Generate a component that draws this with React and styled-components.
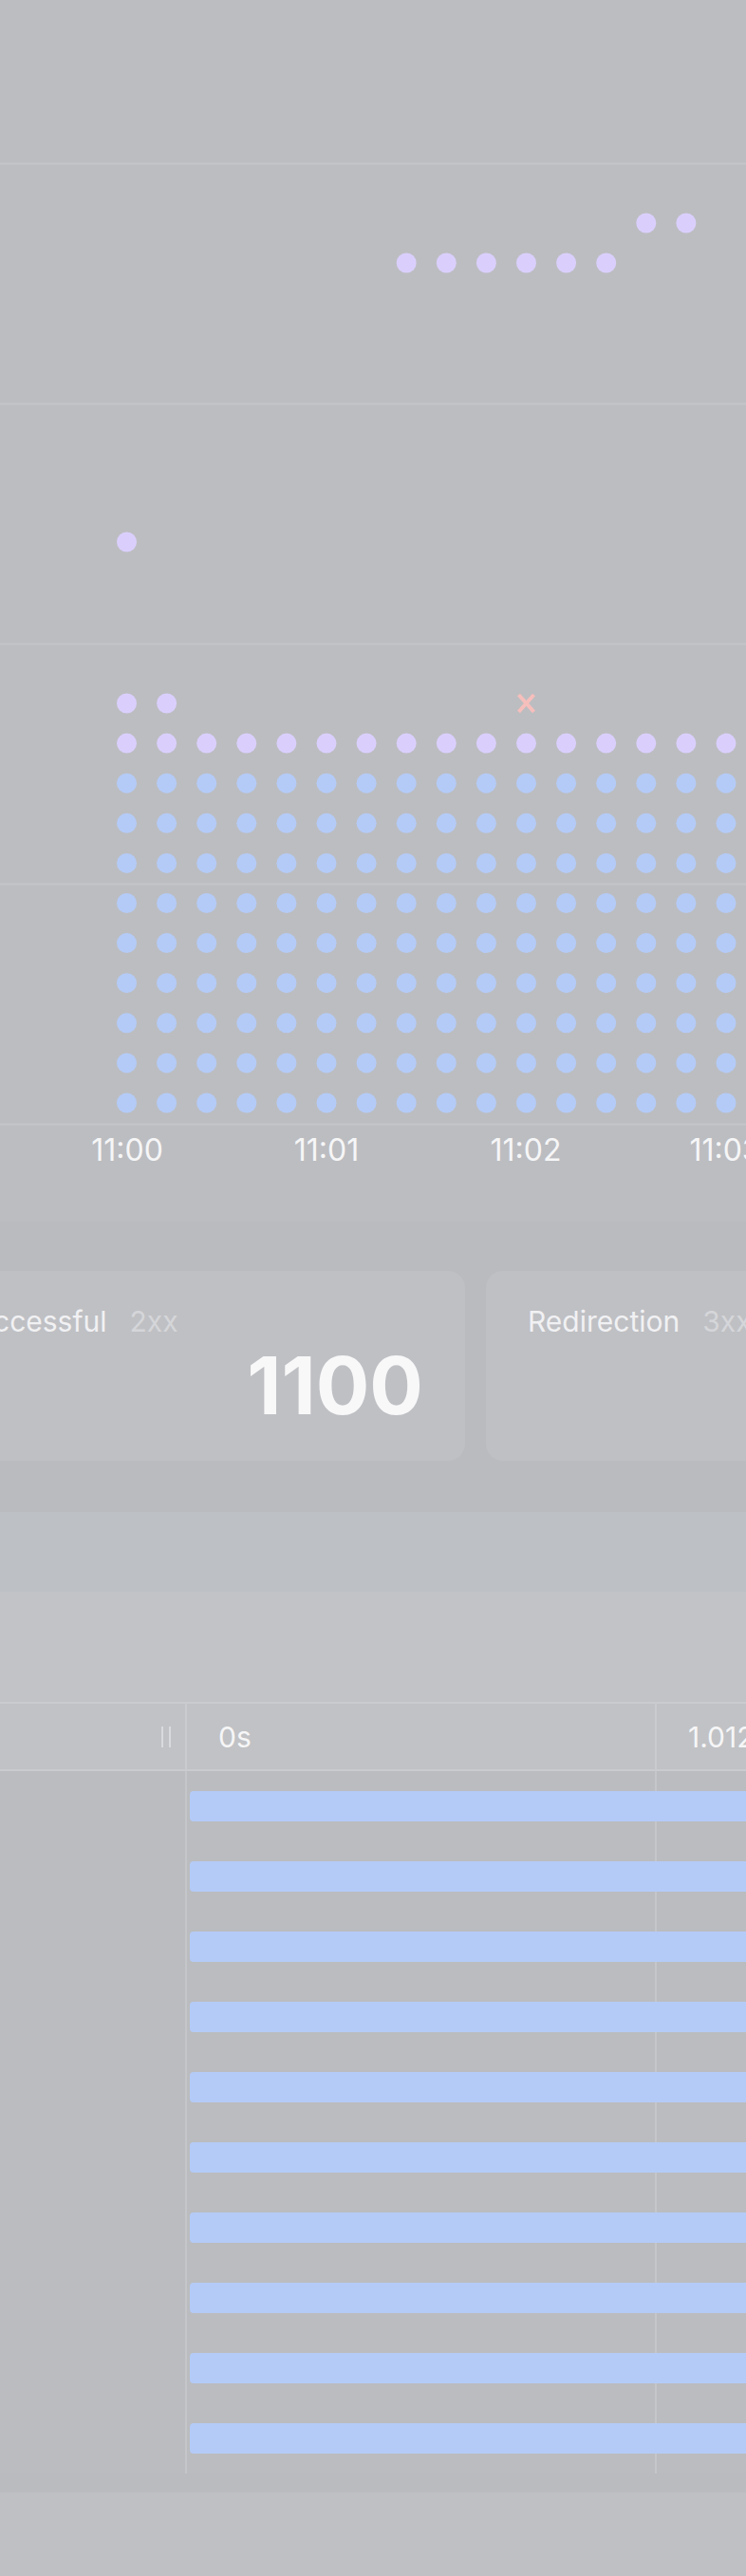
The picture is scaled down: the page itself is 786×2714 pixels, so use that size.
import React from "react";
import styled, { createGlobalStyle } from "styled-components";

const GlobalStyle = createGlobalStyle`
  html, body {
    margin: 0;
    padding: 0;
  }
  body {
    background: #babbbf;
    font-family: Inter, "Noto Sans", sans-serif;
    -webkit-font-smoothing: antialiased;
  }
`;

const Page = styled.div`
  width: 786px;
  height: 2714px;
  overflow: hidden;
  background: #babbbf;
`;

const ChartPanel = styled.section`
  height: 1287px;
  background: #bcbdc1;
  display: flex;
  flex-direction: column;
`;

const ChartSvg = styled.svg`
  display: block;
  flex: none;
`;

const Axis = styled.div`
  display: flex;
  padding-left: 29px;
  height: 36px;
`;

const Tick = styled.span`
  flex: none;
  width: 210px;
  text-align: center;
  font-size: 32px;
  line-height: 36px;
  color: #f6f6f7;
`;

const CardsRow = styled.div`
  display: flex;
  gap: 22px;
  margin-left: -88px;
  padding: 52px 0 54px;
`;

const Card = styled.div`
  flex: none;
  width: 578px;
  height: 200px;
  box-sizing: border-box;
  padding: 36px 44px 0;
  background: #bfc0c4;
  border-radius: 18px;
  display: flex;
  flex-direction: column;
`;

const CardTitle = styled.div`
  font-size: 30px;
  line-height: 34px;
  color: #f1f1f3;
  white-space: nowrap;
`;

const Code = styled.span`
  margin-left: 24px;
  color: #d5d6d9;
`;

const Value = styled.div`
  margin-top: 9px;
  font-size: 84px;
  font-weight: 700;
  line-height: 1;
  text-align: right;
  color: #f8f8f9;
`;

const Band = styled.div`
  height: ${(p) => p.h}px;
  background: ${(p) => p.bg};
`;

const Table = styled.div`
  border-top: 2px solid #cacbcf;
`;

const HeaderRow = styled.div`
  display: grid;
  grid-template-columns: 195px 495px 495px;
  height: 69px;
  background: #c1c2c5;
  border-bottom: 2px solid #cacbcf;
`;

const NameCell = styled.div`
  display: flex;
  align-items: center;
  justify-content: flex-end;
  padding-right: 15px;
`;

const Handle = styled.span`
  width: 10px;
  height: 22px;
  box-sizing: border-box;
  border-left: 2px solid #d9dadd;
  border-right: 2px solid #d9dadd;
`;

const TimeCell = styled.div`
  display: flex;
  align-items: center;
  padding-left: 33px;
  border-left: 2px solid #cacbcf;
  font-size: 30px;
  color: #f6f6f7;
  white-space: nowrap;
`;

const Body = styled.div`
  padding-left: 200px;
  background:
    linear-gradient(
      to right,
      transparent 195px,
      #c5c6c9 195px,
      #c5c6c9 197px,
      transparent 197px,
      transparent 690px,
      #c5c6c9 690px,
      #c5c6c9 692px,
      transparent 692px
    ),
    #bbbcbf;
`;

const BarRow = styled.div`
  height: 74px;
  display: flex;
  align-items: center;
`;

const Bar = styled.div`
  width: 1200px;
  height: 32px;
  flex: none;
  border-radius: 4px;
  background: #b4cbf7;
`;

const Gap = styled.div`
  height: 20px;
`;

const PURPLE = "#dacffc";
const BLUE = "#b4cbf7";
const colX = (i) => 133.5 + 42.1 * i;
const rowY = (k) => 741 + 42.1 * k;

const scatter = [
  { c: 0, y: 571, fill: PURPLE },
  ...[7, 8, 9, 10, 11, 12].map((c) => ({ c, y: 277, fill: PURPLE })),
  { c: 13, y: 235, fill: PURPLE },
  { c: 14, y: 235, fill: PURPLE },
  { c: 0, y: rowY(0), fill: PURPLE },
  { c: 1, y: rowY(0), fill: PURPLE },
];

const Chart = () => {
  const dots = [...scatter];
  for (let c = 0; c < 17; c++) {
    dots.push({ c, y: rowY(1), fill: PURPLE });
    for (let k = 2; k <= 10; k++) dots.push({ c, y: rowY(k), fill: BLUE });
  }
  // failed request marker
  const ex = colX(10);
  const ey = rowY(0);
  return (
    <ChartSvg width="786" height="1194" viewBox="0 0 786 1194">
      {[0, 1, 2, 3, 4].map((i) => (
        <line
          key={i}
          x1="0"
          x2="786"
          y1={172.5 + 253 * i}
          y2={172.5 + 253 * i}
          stroke="#c4c5c9"
          strokeWidth="2"
        />
      ))}
      {dots.map((d, i) => (
        <circle key={i} cx={colX(d.c)} cy={d.y} r="10.5" fill={d.fill} />
      ))}
      <g stroke="#f6bfbc" strokeWidth="4" strokeLinecap="butt">
        <line x1={ex - 8} y1={ey - 9} x2={ex + 8} y2={ey + 9} />
        <line x1={ex + 8} y1={ey - 9} x2={ex - 8} y2={ey + 9} />
      </g>
    </ChartSvg>
  );
};

const cards = [
  { title: "Successful", code: "2xx", value: "1100" },
  { title: "Redirection", code: "3xx", value: "" },
  { title: "Client Error", code: "4xx", value: "" },
];

const App = () => {
  return (
    <Page>
      <GlobalStyle />
      <ChartPanel>
        <Chart />
        <Axis>
          {["11:00", "11:01", "11:02", "11:03"].map((t) => (
            <Tick key={t}>{t}</Tick>
          ))}
        </Axis>
      </ChartPanel>
      <CardsRow>
        {cards.map((c) => (
          <Card key={c.code}>
            <CardTitle>
              {c.title}
              <Code>{c.code}</Code>
            </CardTitle>
            <Value>{c.value}</Value>
          </Card>
        ))}
      </CardsRow>
      <Band h={84} bg="#bdc0c4" />
      <Band h={116} bg="#c1c3c7" />
      <Table>
        <HeaderRow>
          <NameCell>
            <Handle />
          </NameCell>
          <TimeCell>0s</TimeCell>
          <TimeCell>1.012s</TimeCell>
        </HeaderRow>
        <Body>
          {Array.from({ length: 10 }, (_, i) => (
            <BarRow key={i}>
              <Bar />
            </BarRow>
          ))}
        </Body>
      </Table>
      <Gap />
      <Band h={88} bg="#bec0c4" />
    </Page>
  );
};

export default App;
